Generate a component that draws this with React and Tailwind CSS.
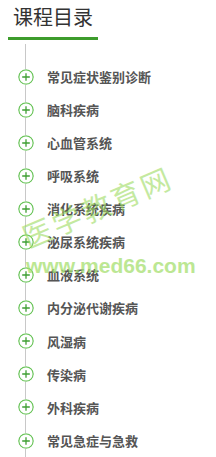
import React from "react"

const chapters = [
  "常见症状鉴别诊断",
  "脑科疾病",
  "心血管系统",
  "呼吸系统",
  "消化系统疾病",
  "泌尿系统疾病",
  "血液系统",
  "内分泌代谢疾病",
  "风湿病",
  "传染病",
  "外科疾病",
  "常见急症与急救",
]

function PlusCircle() {
  return (
    <svg width="16" height="16" viewBox="0 0 16 16" className="shrink-0 bg-white rounded-full">
      <circle cx="8" cy="8" r="7.2" fill="white" stroke="#6cc55c" strokeWidth="1.3" />
      <path d="M8 4.2v7.6M4.2 8h7.6" stroke="#3f9f33" strokeWidth="1.3" />
    </svg>
  )
}

export default function App() {
  return (
    <div
      className="relative w-[216px] h-[457px] overflow-hidden bg-white"
      style={{ fontFamily: '"Noto Sans CJK SC", "Liberation Sans", sans-serif' }}
    >
      <div className="pl-2 pt-[2px]">
        <div className="inline-block w-[90px]">
          <h2 className="pl-[5px] text-[20px] leading-[30px] text-[#333] font-normal">课程目录</h2>
          <div className="mt-[5px] h-[3px] bg-[#3d9c2c]" />
        </div>
      </div>

      <div className="relative ml-[18px] mt-[20px]">
        <div className="absolute left-[7px] top-[-16px] bottom-[-20px] w-px bg-[#c8c8c8]" />
        <ul className="relative">
          {chapters.map((c) => (
            <li key={c} className="flex items-center h-[33.1px] gap-[13px]">
              <PlusCircle />
              <span className="text-[13px] font-bold text-[#555]">{c}</span>
            </li>
          ))}
        </ul>
      </div>

      {/* watermark */}
      <div className="absolute left-[97px] top-[206px] -translate-x-1/2 -translate-y-1/2 -rotate-[23deg] whitespace-nowrap text-[29px] leading-none tracking-[3px] text-[#9ddc62] opacity-60 pointer-events-none">
        医学教育网
      </div>
      <div
        className="absolute left-[26px] top-[255px] whitespace-nowrap text-[21px] leading-none font-bold text-[#a6e070] opacity-75 pointer-events-none"
        style={{ fontFamily: '"Liberation Sans", sans-serif' }}
      >
        www.med66.com
      </div>
    </div>
  )
}
